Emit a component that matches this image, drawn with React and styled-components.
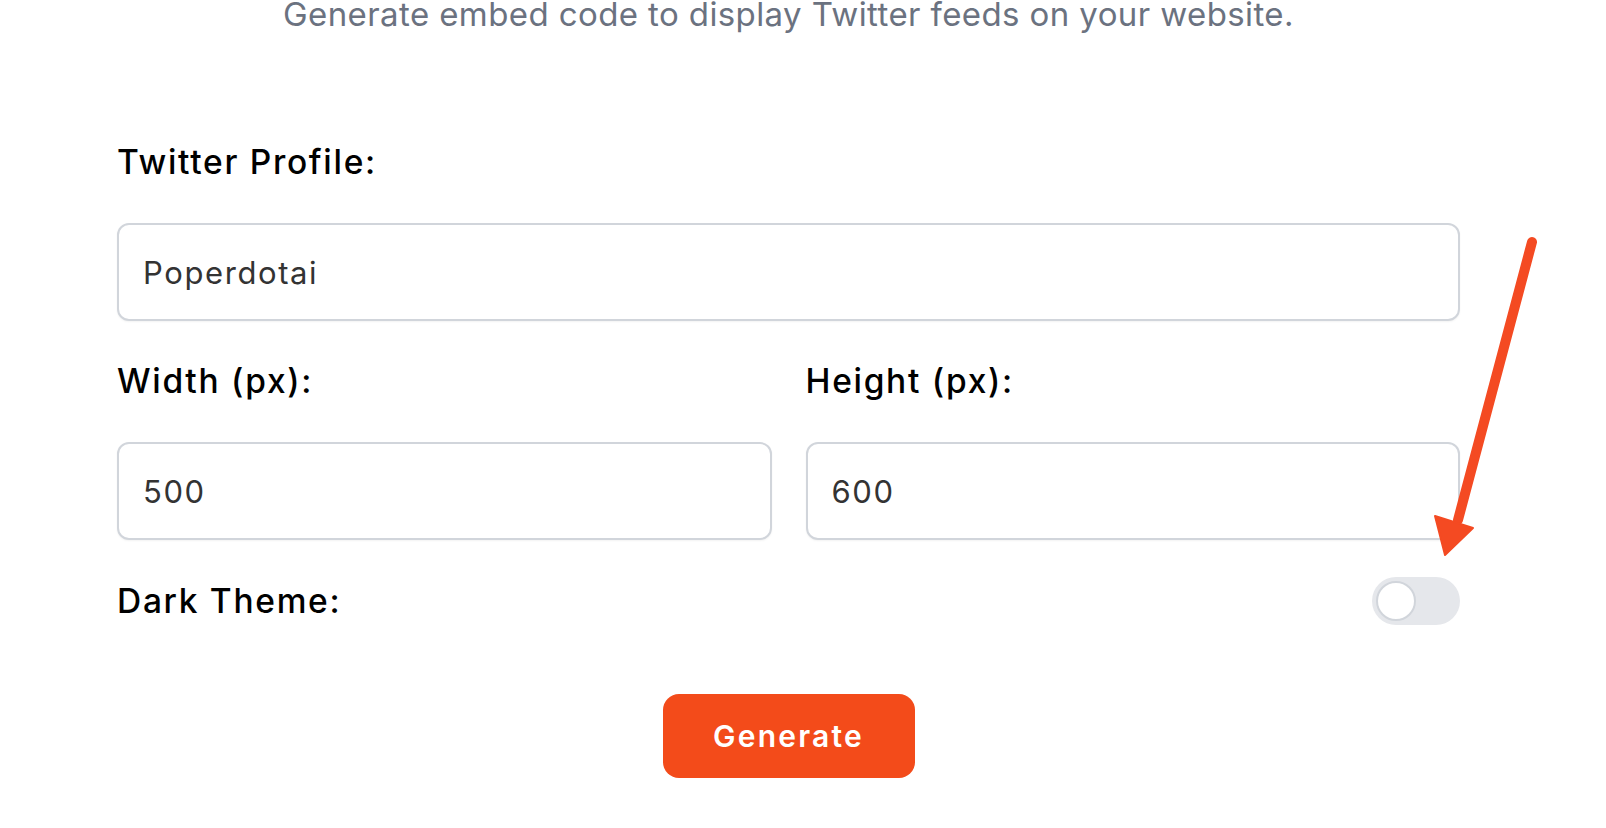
import React, { useState } from "react";
import styled, { createGlobalStyle } from "styled-components";

const GlobalStyle = createGlobalStyle`
  html, body {
    margin: 0;
    padding: 0;
    background: #ffffff;
  }
  body {
    font-family: Inter, "Noto Sans", "Liberation Sans", sans-serif;
    -webkit-font-smoothing: antialiased;
  }
  * { box-sizing: border-box; }
`;

const Page = styled.div`
  position: relative;
  width: 1606px;
  height: 828px;
  overflow: hidden;
  padding: 0 146px 0 117px;
  display: flex;
  flex-direction: column;
`;

const Subtitle = styled.p`
  margin: -6px 0 0;
  text-align: center;
  font-size: 33px;
  line-height: 40px;
  font-weight: 400;
  color: #6b7280;
  letter-spacing: 0.4px;
`;

const Form = styled.form`
  margin-top: 108px;
  display: flex;
  flex-direction: column;
  gap: 40px;
`;

const Row = styled.div`
  display: grid;
  grid-template-columns: 1fr 1fr;
  column-gap: 34px;
`;

const Field = styled.div`
  display: flex;
  flex-direction: column;
  gap: 41px;
`;

const Label = styled.label`
  font-size: 33.5px;
  line-height: 40px;
  font-weight: 500;
  color: #000000;
  letter-spacing: 1.7px;
`;

const Input = styled.input`
  height: 98px;
  width: 100%;
  border: 2px solid #d1d5db;
  border-radius: 12px;
  padding: 0 24px;
  font-family: inherit;
  font-size: 31px;
  letter-spacing: 1.6px;
  color: #333333;
  background: #ffffff;
  box-shadow: 0 1px 2px rgba(0, 0, 0, 0.05);
  outline: none;
`;

const ToggleRow = styled.div`
  margin-top: -3px;
  height: 48px;
  display: flex;
  align-items: center;
  justify-content: space-between;
`;

const Switch = styled.button`
  position: relative;
  width: 88px;
  height: 48px;
  border: none;
  border-radius: 24px;
  padding: 0;
  cursor: pointer;
  background: ${(p) => (p.$on ? "#f34b1a" : "#e5e7eb")};
`;

const Knob = styled.span`
  position: absolute;
  top: 4px;
  left: ${(p) => (p.$on ? "44px" : "4px")};
  width: 40px;
  height: 40px;
  border-radius: 50%;
  background: #ffffff;
  border: 2px solid #d1d5db;
`;

const Actions = styled.div`
  margin-top: 69px;
  display: flex;
  justify-content: center;
`;

const GenerateButton = styled.button`
  width: 252px;
  height: 84px;
  border: none;
  border-radius: 16px;
  background: #f34b1a;
  color: #ffffff;
  font-family: inherit;
  font-size: 30px;
  font-weight: 600;
  letter-spacing: 2.2px;
  cursor: pointer;
`;

const ArrowOverlay = styled.svg`
  position: absolute;
  left: 1420px;
  top: 230px;
  width: 130px;
  height: 340px;
  pointer-events: none;
`;

export default function App() {
  const [dark, setDark] = useState(false);
  return (
    <>
      <GlobalStyle />
      <Page>
        <Subtitle>Generate embed code to display Twitter feeds on your website.</Subtitle>
        <Form onSubmit={(e) => e.preventDefault()}>
          <Field>
            <Label>Twitter Profile:</Label>
            <Input defaultValue="Poperdotai" />
          </Field>
          <Row>
            <Field>
              <Label>Width (px):</Label>
              <Input defaultValue="500" />
            </Field>
            <Field>
              <Label>Height (px):</Label>
              <Input defaultValue="600" />
            </Field>
          </Row>
          <ToggleRow>
            <Label>Dark Theme:</Label>
            <Switch type="button" $on={dark} onClick={() => setDark(!dark)}>
              <Knob $on={dark} />
            </Switch>
          </ToggleRow>
        </Form>
        <Actions>
          <GenerateButton type="button">Generate</GenerateButton>
        </Actions>
        <ArrowOverlay viewBox="1420 230 130 340">
          <line x1="1532" y1="242" x2="1458" y2="520" stroke="#f44a22" strokeWidth="10" strokeLinecap="round" />
          <polygon points="1435,516 1473,528 1445,555" fill="#f44a22" stroke="#f44a22" strokeWidth="2" strokeLinejoin="round" />
        </ArrowOverlay>
      </Page>
    </>
  );
}
